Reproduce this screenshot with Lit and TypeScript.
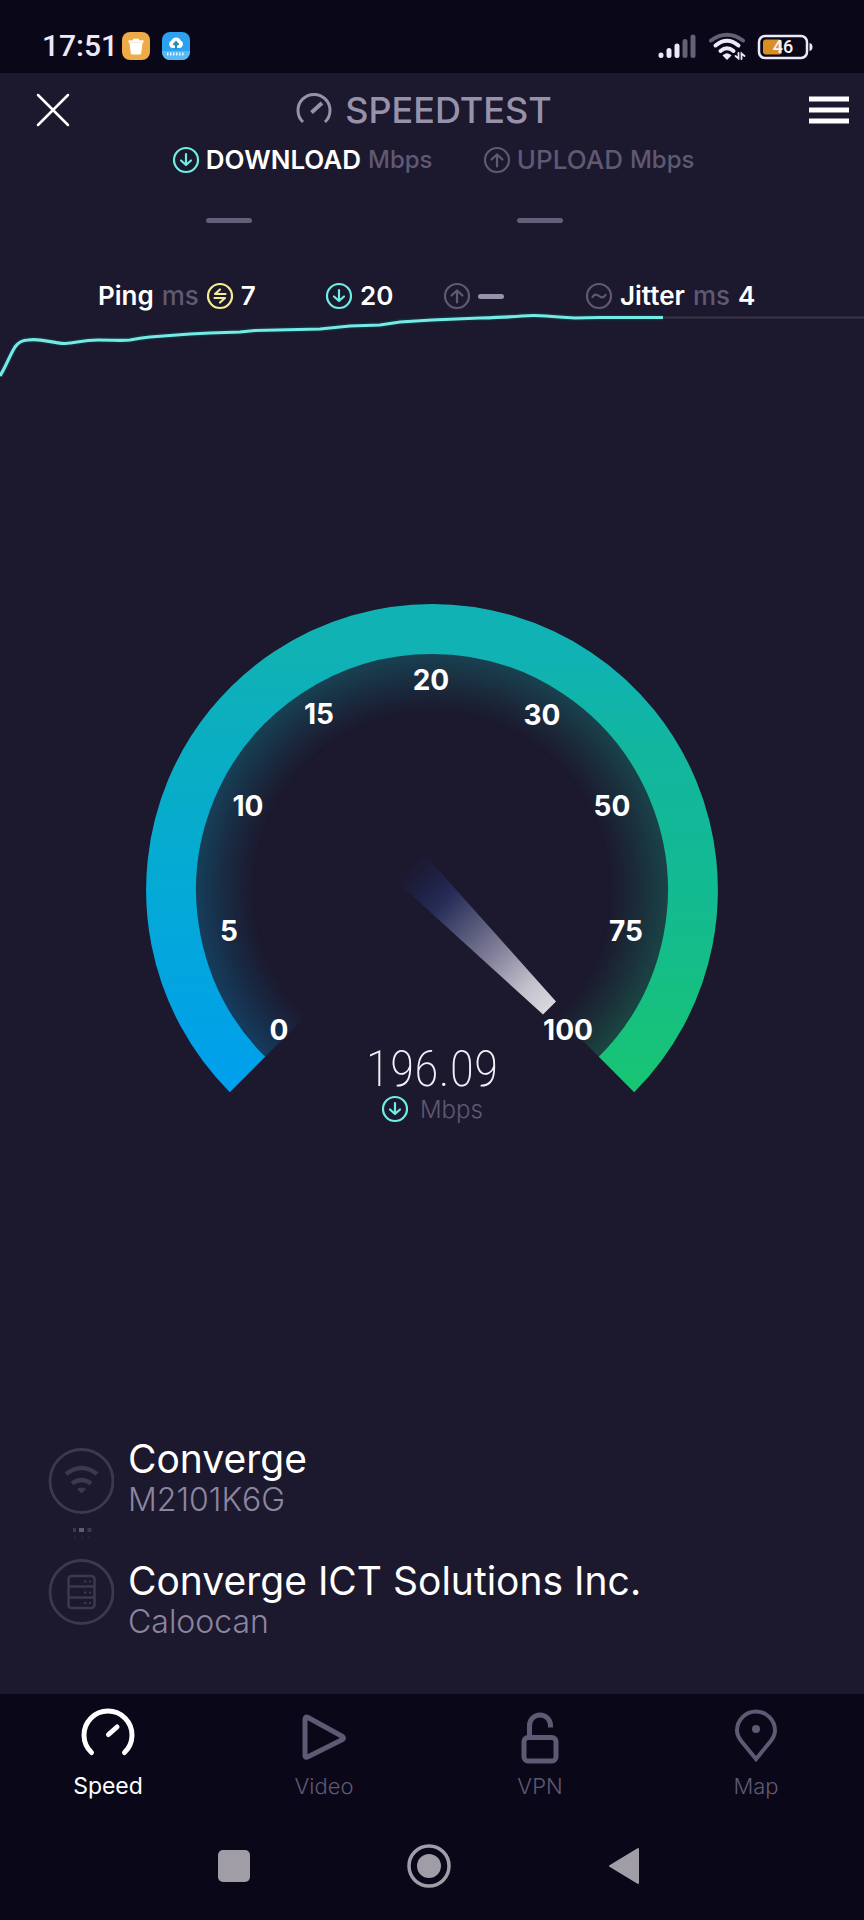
import { LitElement, html, svg, css } from "lit";
import { customElement, property } from "lit/decorators.js";

const RING = svg`<circle cx="13" cy="13" r="12" />`;
const GLYPHS: Record<string, unknown> = {
  down: svg`<path d="M13 7v11M8 13.5l5 4.5 5-4.5" />`,
  up: svg`<path d="M13 19.5V8M7.500 12.500l5.500-5 5.500 5" />`,
  ping: svg`<path d="M18.500 11H8l5-4.500M7.500 15H18l-5 4.500" />`,
  jitter: svg`<path d="M6.500 14c2-3 4-3 6.500-1s4.500 2 6.500-1" />`,
};

@customElement("ring-icon")
export class RingIcon extends LitElement {
  @property() name = "down";
  static styles = css`
    :host { display: block; flex: none; width: 26px; height: 26px; }
    svg { display: block; fill: none; stroke: currentColor; stroke-width: 2.2; stroke-linecap: round; stroke-linejoin: round; overflow: visible; }
  `;
  render() {
    return html`<svg width="26" height="26" viewBox="0 0 26 26" aria-hidden="true">${RING}${GLYPHS[this.name]}</svg>`;
  }
}

@customElement("status-bar")
export class StatusBar extends LitElement {
  static styles = css`
    :host { display: flex; align-items: center; height: 73px; padding: 18px 51px 0 42px; box-sizing: border-box;
      background: #0a0719; color: #ece9f8; font-family: Roboto, sans-serif; }
    .time { font-size: 30px; line-height: 32px; margin-right: 4px; font-weight: 500; }
    svg { display: block; flex: none; }
    .apps { display: flex; gap: 12px; }
    .system { display: flex; gap: 11px; margin-left: auto; }
    .pct { font: 500 18px Roboto, sans-serif; fill: #f4f0ff; }
  `;
  render() {
    return html`
      <span class="time">17:51</span>
      <div class="apps">
        <svg width="28" height="28" viewBox="0 0 28 28" aria-hidden="true">
          <rect width="28" height="28" rx="8" fill="#efab48" />
          <path d="M6.500 9.500h15M11 8h6" stroke="#fff" stroke-width="2.500" />
          <path d="M7.500 11h13l-1.300 10.500q-.2 1-1.200 1h-8q-1 0-1.200-1z" fill="#fff" />
        </svg>
        <svg width="28" height="28" viewBox="0 0 28 28" aria-hidden="true">
          <rect width="28" height="28" rx="8" fill="#2ba1ef" />
          <path d="M0 19h28v1a8 8 0 0 1-8 8H8a8 8 0 0 1-8-8z" fill="#58b9f3" />
          <path d="M10 16a4 4 0 0 1-.5-7.500 5 5 0 0 1 9.200 0A4 4 0 0 1 18 16z" fill="#fff" />
          <path d="M14 17v-6M11.500 13l2.500-3 2.500 3" fill="none" stroke="#238fa9" stroke-width="2" />
          <path d="M5 22h18" stroke="#e4f6ff" stroke-width="3" stroke-dasharray="1.500 1.500" />
        </svg>
      </div>
      <div class="system">
        <svg width="40" height="28" viewBox="0 0 40 28" aria-hidden="true" stroke-width="5" stroke-linecap="round">
          <path d="M4 23v.5M12 18.500v5M20 14v9.500" stroke="#ece9f8" />
          <path d="M28 9.500v14M36 5v18.500" stroke="#656175" />
        </svg>
        <svg width="38" height="28" viewBox="0 0 38 28" aria-hidden="true" fill="none" stroke-width="4" stroke-linecap="round">
          <path d="M3 8.500Q19-3 35 8.500" stroke="#656175" />
          <path d="M7.500 13.500q11.500-9.500 23 0M12.500 19q6.500-5.500 13 0" stroke="#ece9f8" />
          <path d="M16 23.500l3 3 3-3q-3-2.500-6 0z" fill="#ece9f8" stroke="#ece9f8" stroke-width="2" />
          <path d="M30.500 21v5.500l-3-2.500M33.500 27v-5.500l3 2.500" stroke="#ece9f8" stroke-width="1.800" />
        </svg>
        <svg width="56" height="28" viewBox="0 0 56 28" role="img" aria-label="Battery">
          <rect x="2" y="4" width="48" height="22" rx="6" fill="none" stroke="#ece9f8" stroke-width="2.500" />
          <rect x="6" y="7.500" width="19" height="15" rx="3" fill="#d98f22" />
          <path d="M52.500 11q3 .5 3 4t-3 4z" fill="#ece9f8" />
          <text class="pct" x="26" y="21" text-anchor="middle">46</text>
        </svg>
      </div>`;
  }
}

const TICKS = [
  { v: 0, x: 279, y: 1030 }, { v: 5, x: 229, y: 931 }, { v: 10, x: 248, y: 806 },
  { v: 15, x: 319, y: 714 }, { v: 20, x: 431, y: 680 }, { v: 30, x: 542, y: 715 },
  { v: 50, x: 612, y: 806 }, { v: 75, x: 626, y: 931 }, { v: 100, x: 568, y: 1030 },
];

@customElement("speed-gauge")
export class SpeedGauge extends LitElement {
  @property() value = "196.09";
  static styles = css`
    :host { display: block; }
    svg { display: block; width: 100%; height: auto; }
    .tick { font: 700 28px Inter, sans-serif; fill: #fff; text-anchor: middle; }
    .value { font: 200 50px "Roboto Condensed", Roboto, sans-serif; fill: #f3f0fb; text-anchor: middle; }
    .unit { font: 300 24px Inter, sans-serif; fill: #5f5973; }
    .ring { fill: none; stroke: #6feee6; stroke-width: 2.2; stroke-linecap: round; stroke-linejoin: round; }
  `;
  render() {
    return html`<svg viewBox="0 600 864 530" role="img" aria-label="Download speed gauge">
      <defs>
        <linearGradient id="left" gradientUnits="userSpaceOnUse" x1="0" y1="1092" x2="0" y2="654">
          <stop offset="0" stop-color="#009fee" /><stop offset=".45" stop-color="#04a9d6" />
          <stop offset=".8" stop-color="#0aaec2" /><stop offset="1" stop-color="#10b2b4" />
        </linearGradient>
        <linearGradient id="right" gradientUnits="userSpaceOnUse" x1="0" y1="654" x2="0" y2="1092">
          <stop offset="0" stop-color="#10b2b4" /><stop offset=".2" stop-color="#12b6a0" />
          <stop offset=".6" stop-color="#13bb8e" /><stop offset="1" stop-color="#18c572" />
        </linearGradient>
        <radialGradient id="fade" gradientUnits="userSpaceOnUse" cx="432" cy="890" r="238">
          <stop offset=".74" stop-color="#fff" stop-opacity="0" /><stop offset=".86" stop-color="#fff" stop-opacity=".12" />
          <stop offset="1" stop-color="#fff" stop-opacity=".28" />
        </radialGradient>
        <mask id="glow" maskUnits="userSpaceOnUse" x="0" y="600" width="864" height="530">
          <rect x="0" y="600" width="864" height="530" fill="url(#fade)" />
        </mask>
        <linearGradient id="needle" gradientUnits="userSpaceOnUse" x1="410" y1="867" x2="549" y2="1008">
          <stop offset="0" stop-color="#1c2350" stop-opacity=".1" /><stop offset=".25" stop-color="#262d58" />
          <stop offset=".6" stop-color="#7f7d97" /><stop offset=".85" stop-color="#c3c1cc" /><stop offset="1" stop-color="#d9d8de" />
        </linearGradient>
      </defs>
      <g mask="url(#glow)">
        <path d="M432 890L264 1058A238 238 0 0 1 432 652z" fill="url(#left)" />
        <path d="M432 890V652A238 238 0 0 1 600 1058z" fill="url(#right)" />
      </g>
      <g fill="none" stroke-width="50">
        <path d="M247.500 1074.500A261 261 0 0 1 433 629" stroke="url(#left)" />
        <path d="M432 629A261 261 0 0 1 616.500 1074.500" stroke="url(#right)" />
      </g>
      <path d="M425 855L556 1001.500 543 1014.500 395 880z" fill="url(#needle)" />
      ${TICKS.map((t) => svg`<text class="tick" x=${t.x} y=${t.y + 10}>${t.v}</text>`)}
      <text class="value" x="432" y="1086">${this.value}</text>
      <g class="ring" transform="translate(382 1096)">${RING}${GLYPHS.down}</g>
      <text class="unit" x="420" y="1118">Mbps</text>
    </svg>`;
  }
}

@customElement("app-root")
export class AppRoot extends LitElement {
  static styles = css`
    :host { display: flex; flex-direction: column; min-height: 100vh; background: #1c182d; color: #fff;
      font-family: Inter, "Liberation Sans", sans-serif; }
    svg { display: block; }
    button { border: 0; padding: 0; background: none; color: inherit; font: inherit; cursor: pointer; }
    a { color: inherit; text-decoration: none; }
    .header { display: grid; grid-template-columns: 32% 1fr auto; align-items: center; height: 73px; padding: 0 15px 0 36px; }
    .brand { display: flex; align-items: center; gap: 13px; margin: 0; font-size: 36px; line-height: 40px; font-weight: 500; color: #9792ac; }
    .menu { justify-self: end; }
    .close { justify-self: start; }
    .row { display: flex; align-items: center; gap: 7px; font-size: 26px; line-height: 28px; font-weight: 600; }
    .rates { display: grid; grid-template-columns: 45% 1fr; padding-left: 20%; }
    .dash { width: 46px; height: 5px; border-radius: 3px; background: #645e78; }
    .rates .dash { margin: 44px 0 0 33px; }
    .stats { display: grid; grid-template-columns: 228fr 118fr 142fr 278fr; padding: 59px 0 0 98px; }
    .stats .row { gap: 8px; }
    .dash.short { width: 26px; background: #9792ac; }
    .dim { color: #5f5973; }
    .light { font-weight: 500; }
    .unit { font-size: 24px; }
    .cyan { color: #6feee6; }
    .yellow { color: #f5ee90; }
    .trend { width: 100%; height: auto; }
    .gauge { margin: auto 0; padding: 0 0 87px; }
    .hosts { display: flex; gap: 14px; padding: 0 48px 54px; }
    .marks { display: flex; flex-direction: column; padding-top: 12px; color: #3d3750; }
    .names { display: flex; flex-direction: column; gap: 40px; }
    .name { margin: 0; font-size: 39px; line-height: 46px; font-weight: 400; }
    .sub { margin: 0; font-size: 32px; line-height: 36px; font-weight: 300; color: #8b85a0; }
    .tabs { display: grid; grid-template-columns: repeat(4, 1fr); background: #0a0719; padding: 14px 0 44px; color: #5f5973; }
    .tab { display: flex; flex-direction: column; align-items: center; gap: 8px; font-size: 22px; line-height: 28px; font-weight: 300; }
    .tab.on { color: #fff; font-size: 23px; font-weight: 400; }
    .keys { display: flex; justify-content: center; background: #0a0719; padding: 0 6px 32px 0; color: #a09da6; }
    .key { width: 195px; display: flex; justify-content: center; }
  `;

  private tab(label: string, icon: unknown, on = false) {
    return html`<a class="tab ${on ? "on" : ""}" href="#${label.toLowerCase()}">
      <svg width="56" height="56" viewBox="0 0 56 56" fill="none" stroke="currentColor" stroke-width="5" stroke-linecap="round" stroke-linejoin="round" aria-hidden="true">${icon}</svg>
      <span>${label}</span></a>`;
  }

  render() {
    return html`
      <status-bar></status-bar>
      <header class="header">
        <button class="close" aria-label="Close">
          <svg width="34" height="34" viewBox="0 0 34 34" stroke="#fff" stroke-width="2.500" stroke-linecap="round"><path d="M2 2l30 30M32 2L2 32" /></svg>
        </button>
        <h1 class="brand">
          <svg width="36" height="36" viewBox="0 0 36 36" fill="none" stroke="currentColor" stroke-width="3" aria-hidden="true">
            <path d="M7 30A16 16 0 1 1 29 30" /><path d="M15.500 20.500L26 11" stroke-width="4" />
          </svg>SPEEDTEST
        </h1>
        <button class="menu" aria-label="Menu">
          <svg width="40" height="28" viewBox="0 0 40 28" stroke="#fff" stroke-width="5"><path d="M0 3h40M0 14h40M0 25h40" /></svg>
        </button>
      </header>
      <main>
        <section class="rates">
          <div><div class="row"><ring-icon class="cyan" name="down"></ring-icon><span>DOWNLOAD</span><span class="dim light unit">Mbps</span></div><div class="dash"></div></div>
          <div><div class="row dim light"><ring-icon name="up"></ring-icon><span>UPLOAD</span><span class="unit">Mbps</span></div><div class="dash"></div></div>
        </section>
        <section class="stats">
          <div class="row"><span>Ping</span><span class="dim light">ms</span><ring-icon class="yellow" name="ping"></ring-icon><span>7</span></div>
          <div class="row"><ring-icon class="cyan" name="down"></ring-icon><span>20</span></div>
          <div class="row"><ring-icon class="dim" name="up"></ring-icon><div class="dash short"></div></div>
          <div class="row"><ring-icon class="dim" name="jitter"></ring-icon><span>Jitter</span><span class="dim light">ms</span><span>4</span></div>
        </section>
        <svg class="trend" viewBox="0 310 864 70" fill="none" aria-hidden="true">
          <path d="M662 317.500H864" stroke="#393448" stroke-width="2" />
          <path d="M0 376C6 366 10 355 15 347Q20 340 28 340C42 338 50 343 65 343.500C76 343 82 340 98 340S120 341 130 340Q140 338 150 337L190 334 210 333 240 332 255 330.500 320 329Q340 327 350 326L380 325 400 322 432 320 480 318Q510 317 522 316T546 316T575 318L600 317.500H663" stroke="#123a46" stroke-width="6" opacity=".6" />
          <path d="M0 376C6 366 10 355 15 347Q20 340 28 340C42 338 50 343 65 343.500C76 343 82 340 98 340S120 341 130 340Q140 338 150 337L190 334 210 333 240 332 255 330.500 320 329Q340 327 350 326L380 325 400 322 432 320 480 318Q510 317 522 316T546 316T575 318L600 317.500H663" stroke="#75ebe6" stroke-width="3.200" />
        </svg>
      </main>
      <section class="gauge"><speed-gauge value="196.09"></speed-gauge></section>
      <section class="hosts">
        <div class="marks">
          <svg width="66" height="177" viewBox="0 0 66 177" fill="none" stroke="currentColor" stroke-width="2.800" aria-hidden="true">
            <circle cx="33.500" cy="33" r="31.500" /><circle cx="33.500" cy="144" r="31.500" />
            <path d="M18 26Q33.500 14 49 26M24 35.500q9.500-7 19 0" stroke-width="4.500" /><path d="M29.500 41q4-2 8 0l-4 4z" fill="currentColor" stroke-width="1" />
            <path d="M25 82h3M39.500 82h4" stroke-width="4" /><path d="M31 82h5" stroke="#5f5973" stroke-width="4" /><path d="M26 89h2M33 89h2M40 89h2" stroke-width="3" opacity=".3" />
            <rect x="20.500" y="128" width="26" height="32" rx="3" stroke-width="2.500" /><path d="M20 138.500h26M20 149.500h26" stroke-width="2.500" />
            <path d="M36 133.500h2.500M41 133.500h2M36 144.500h2.500M41 144.500h2M36 155h2.500M41 155h2" stroke-width="2" />
          </svg>
        </div>
        <div class="names">
          <div><h2 class="name">Converge</h2><p class="sub">M2101K6G</p></div>
          <div><h2 class="name">Converge ICT Solutions Inc.</h2><p class="sub">Caloocan</p></div>
        </div>
      </section>
      <nav class="tabs" aria-label="Sections">
        ${this.tab("Speed", svg`<path d="M11.500 44.500A24 24 0 1 1 44.500 44.500M28.500 26.500L37 19" />`, true)}
        ${this.tab("Video", svg`<path d="M9 11.500v36q0 2.500 2.500 1.500L46.500 31.500q2-1.500 0-3L12 9.500Q9 8 9 11.500z" />`)}
        ${this.tab("VPN", svg`<rect x="12" y="29.500" width="32" height="23.500" rx="4" /><path stroke-linecap="butt" d="M17.500 29V17.500a10.500 10.500 0 0 1 21 0v2" />`)}
        ${this.tab("Map", svg`<path stroke-width="4" stroke-linejoin="miter" d="M28 51L14 34Q9 28 9 22.500a19 19 0 0 1 38 0Q47 28 42 34z" /><circle cx="28" cy="21" r="4" fill="currentColor" stroke="none" />`)}
      </nav>
      <nav class="keys" aria-label="System">
        <button class="key" aria-label="Recent apps"><svg width="44" height="44" viewBox="0 0 44 44" fill="currentColor"><rect x="6" y="6" width="32" height="32" rx="5" /></svg></button>
        <button class="key" aria-label="Home"><svg width="44" height="44" viewBox="0 0 44 44" fill="currentColor"><circle cx="22" cy="22" r="12" /><circle cx="22" cy="22" r="20" fill="none" stroke="currentColor" stroke-width="3.500" /></svg></button>
        <button class="key" aria-label="Back"><svg width="44" height="44" viewBox="0 0 44 44" fill="currentColor" stroke="currentColor" stroke-width="2" stroke-linejoin="round"><path d="M36 5v34L8 22z" /></svg></button>
      </nav>`;
  }
}
